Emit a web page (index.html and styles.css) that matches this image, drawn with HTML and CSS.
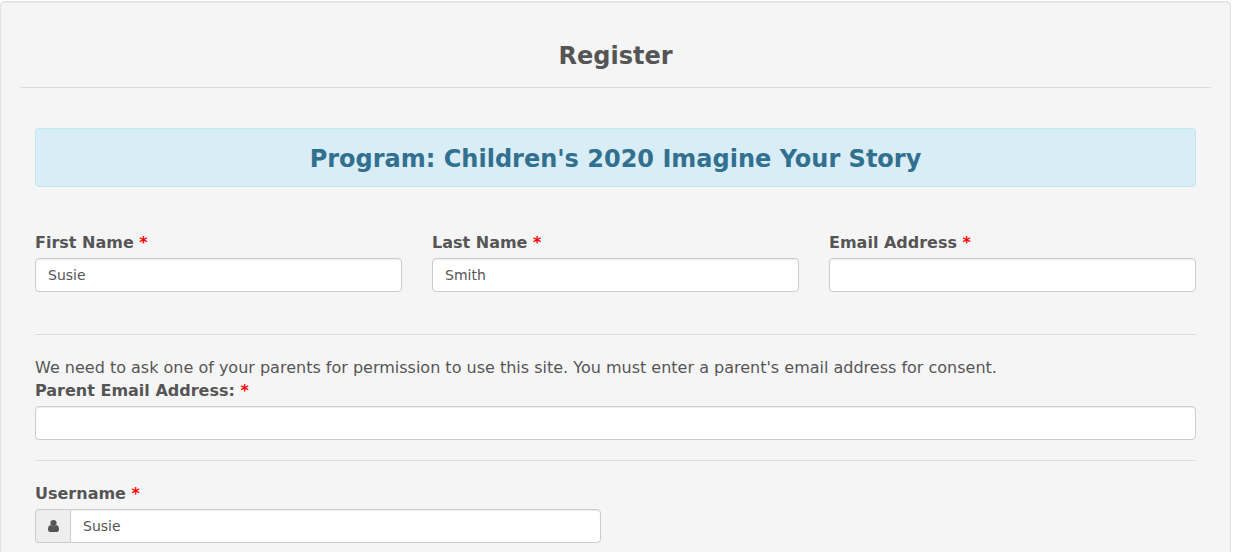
FILE: index.html
```
<!DOCTYPE html>
<html lang="en">
<head>
  <meta charset="UTF-8" />
  <meta name="viewport" content="width=device-width, initial-scale=1" />
  <title>Register</title>
  <link rel="stylesheet" href="styles.css">
</head>
<body>
  <main class="well">
    <h1>Register</h1>
    <form class="register-form">
      <h2 class="program">Program: Children's 2020 Imagine Your Story</h2>

      <div class="row names">
        <div class="form-group">
          <label for="firstName">First Name <span class="required">*</span></label>
          <input type="text" id="firstName" name="firstName" value="Susie" required />
        </div>
        <div class="form-group">
          <label for="lastName">Last Name <span class="required">*</span></label>
          <input type="text" id="lastName" name="lastName" value="Smith" required />
        </div>
        <div class="form-group">
          <label for="email">Email Address <span class="required">*</span></label>
          <input type="email" id="email" name="email" required />
        </div>
      </div>

      <hr />

      <div class="form-group parent">
        <p>We need to ask one of your parents for permission to use this site. You must enter a parent's email address for consent.</p>
        <label for="parentEmail">Parent Email Address: <span class="required">*</span></label>
        <input type="email" id="parentEmail" name="parentEmail" required />
      </div>

      <hr />

      <div class="row account">
        <div class="form-group">
          <label for="username">Username <span class="required">*</span></label>
          <div class="input-group">
            <span class="addon">
              <svg viewBox="0 0 11 12" width="11" height="12" aria-hidden="true">
                <circle cx="5.5" cy="3.1" r="3.1" />
                <path d="M2.6 5C.7 5.200 0 7.200 0 9.500C0 11 .9 12 2.200 12H8.800C10.100 12 11 11 11 9.500C11 7.200 10.300 5.200 8.400 5A4 4 0 0 1 2.600 5Z" />
              </svg>
            </span>
            <input type="text" id="username" name="username" value="Susie" required />
          </div>
        </div>
      </div>
    </form>
  </main>
</body>
</html>
```

FILE: styles.css
```
* {
  box-sizing: border-box;
}
body {
  margin: 0;
  background-color: #fff;
  color: #555;
  font-family: Verdana, "DejaVu Sans", sans-serif;
  font-size: 16px;
  line-height: 23px;
}
.well {
  margin: 1px 2px 0 0;
  padding: 19px;
  background-color: #f5f5f5;
  border: 1px solid #e3e3e3;
  border-radius: 4px;
  box-shadow: inset 0 1px 1px rgba(0,0,0,0.05);
}
h1 {
  margin: 0 0 40px;
  padding: 19px 0 15px;
  border-bottom: 1px solid #ddd;
  font-size: 24px;
  line-height: 32px;
  text-align: center;
}
.register-form {
  padding: 0 15px;
}
.program {
  margin: 0 0 44px;
  padding: 15px 15px 11px;
  background-color: #d9edf7;
  border: 1px solid #bce8f1;
  border-radius: 4px;
  color: #31708f;
  font-size: 24px;
  line-height: 31px;
  text-align: center;
}
.row {
  display: grid;
  column-gap: 30px;
}
.names {
  grid-template-columns: repeat(3, 1fr);
  margin-bottom: 42px;
}
.account {
  grid-template-columns: repeat(2, 1fr);
}
label {
  display: block;
  margin-bottom: 4px;
  font-weight: bold;
}
.required {
  color: #f00;
}
p {
  margin: 0;
}
input {
  display: block;
  width: 100%;
  height: 34px;
  padding: 6px 12px;
  background-color: #fff;
  border: 1px solid #ccc;
  border-radius: 4px;
  box-shadow: inset 0 1px 1px rgba(0,0,0,0.075);
  color: #555;
  font-family: inherit;
  font-size: 14px;
}
input:focus {
  border-color: #66afe9;
  outline: 0;
}
hr {
  margin: 0 0 21px;
  border: 0;
  border-top: 1px solid #ddd;
}
.parent {
  margin-bottom: 20px;
}
.input-group {
  display: flex;
}
.addon {
  display: flex;
  flex: none;
  align-items: center;
  justify-content: center;
  width: 35px;
  background-color: #eee;
  border: 1px solid #ccc;
  border-right: 0;
  border-radius: 4px 0 0 4px;
}
.addon svg {
  fill: #555;
}
.input-group input {
  border-radius: 0 4px 4px 0;
}
```
